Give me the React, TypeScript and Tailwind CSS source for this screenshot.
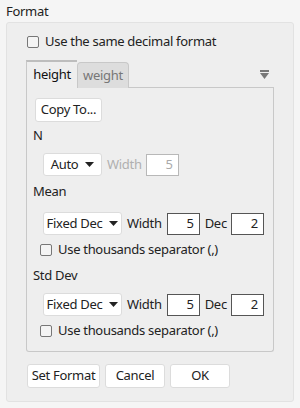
import React from 'react';

const font = { fontFamily: '"Noto Sans", "Open Sans", sans-serif' };

function Check({ label }: { label: string }) {
    return (
        <label className="flex items-center gap-[6px] text-[13px] text-[#222] leading-none whitespace-nowrap">
            <span className="w-[12px] h-[12px] rounded-[2px] border border-[#777] bg-[#f4f4f4]" />
            {label}
        </label>
    );
}

function Drop({ label, w }: { label: string; w: string }) {
    return (
        <div className={`${w} h-[23px] flex items-center justify-center gap-[7px] bg-white border border-[#dcdcdc] rounded-[3px] text-[13px] text-[#222] whitespace-nowrap`}>
            {label}
            <svg width="9" height="5" viewBox="0 0 9 5"><path d="M0 0h9L4.5 5z" fill="#222" /></svg>
        </div>
    );
}

function Field({ value, disabled }: { value: string; disabled?: boolean }) {
    return (
        <div className={`w-[33px] h-[22px] bg-white border flex items-center justify-end pr-[5px] text-[13px] ${disabled ? 'border-[#b8b8b8] text-[#aaa]' : 'border-[#555] text-[#222]'}`}>
            {value}
        </div>
    );
}

function FormatRow() {
    return (
        <div className="flex items-center pl-[10px]">
            <Drop label="Fixed Dec" w="w-[79px]" />
            <span className="ml-[5px] mr-[5px] text-[13px] text-[#222]">Width</span>
            <Field value="5" />
            <span className="ml-[5px] mr-[4px] text-[13px] text-[#222]">Dec</span>
            <Field value="2" />
        </div>
    );
}

function Btn({ label, w }: { label: string; w: string }) {
    return (
        <div className={`${w} h-[24px] flex items-center justify-center bg-white border border-[#dcdcdc] rounded-[3px] text-[13px] text-[#222] whitespace-nowrap`}>
            {label}
        </div>
    );
}

export default function App() {
    return (
        <div className="w-[300px] h-[408px] bg-[#f5f5f5] px-[6px] pt-[2px] tracking-[-0.3px]" style={font}>
            <div className="text-[13px] text-[#222] h-[20px] leading-[18px]">Format</div>
            <div className="h-[380px] bg-[#eeeeee] border border-[#e2e2e2] rounded-[3px] pt-[12px]">
                <div className="pl-[20px]">
                    <Check label="Use the same decimal format" />
                </div>
                <div className="ml-[19px] mr-[19px] mt-[12px]">
                    <div className="flex items-end relative">
                        <div className="w-[51px] h-[28px] bg-[#eeeeee] border-t-[2px] border-t-[#bdbdbd] border-l border-l-[#c8c8c8] flex items-center justify-center text-[13px] text-[#111]">height</div>
                        <div className="w-[52px] h-[26px] bg-[#dddddd] border border-[#c8c8c8] border-b-0 rounded-t-[4px] flex items-center justify-center text-[13px] text-[#777]">weight</div>
                        <div className="flex-1 h-[26px] border-b border-[#c8c8c8] self-end" />
                        <svg className="absolute right-[5px] top-[10px]" width="9" height="9" viewBox="0 0 9 9">
                            <rect x="0" y="0" width="9" height="2" fill="#777" />
                            <path d="M0 3h9L4.5 9z" fill="#777" />
                        </svg>
                    </div>
                    <div className="h-[264px] border border-t-0 border-[#c8c8c8] rounded-b-[3px] pt-[10px] flex flex-col">
                        <div className="pl-[8px]">
                            <Btn label="Copy To..." w="w-[67px]" />
                        </div>
                        <div className="pl-[6px] mt-[4px] text-[13px] text-[#222] h-[20px]">N</div>
                        <div className="flex items-center pl-[16px] mt-[7px]">
                            <Drop label="Auto" w="w-[59px]" />
                            <span className="ml-[5px] mr-[4px] text-[13px] text-[#b0b0b0]">Width</span>
                            <Field value="5" disabled />
                        </div>
                        <div className="pl-[6px] mt-[6px] text-[13px] text-[#222] h-[20px]">Mean</div>
                        <div className="pl-[6px] mt-[10px]"><FormatRow /></div>
                        <div className="pl-[13px] mt-[8px]"><Check label="Use thousands separator (,)" /></div>
                        <div className="pl-[6px] mt-[10px] text-[13px] text-[#222] h-[20px]">Std Dev</div>
                        <div className="pl-[6px] mt-[7px]"><FormatRow /></div>
                        <div className="pl-[13px] mt-[8px]"><Check label="Use thousands separator (,)" /></div>
                    </div>
                </div>
                <div className="flex gap-[5px] pl-[20px] mt-[12px]">
                    <Btn label="Set Format" w="w-[73px]" />
                    <Btn label="Cancel" w="w-[60px]" />
                    <Btn label="OK" w="w-[60px]" />
                </div>
            </div>
        </div>
    );
}
